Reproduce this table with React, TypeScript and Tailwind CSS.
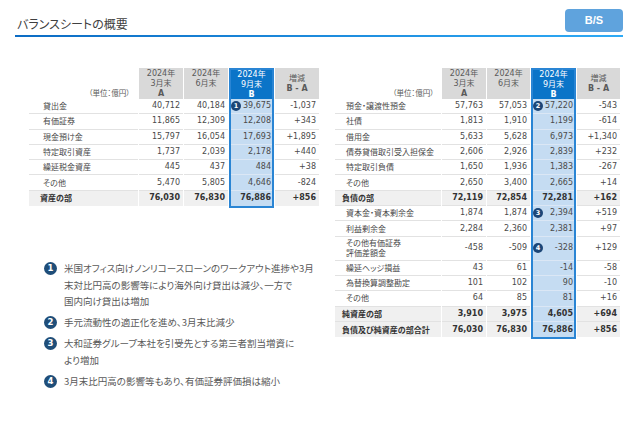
type Row = {
  label: string;
  a: string;
  b: string;
  c: string;
  d: string;
  bold?: boolean;
  badge?: number;
  two?: boolean;
};

const leftRows: Row[] = [
  { label: "貸出金", a: "40,712", b: "40,184", c: "39,675", d: "-1,037", badge: 1 },
  { label: "有価証券", a: "11,865", b: "12,309", c: "12,208", d: "+343" },
  { label: "現金預け金", a: "15,797", b: "16,054", c: "17,693", d: "+1,895" },
  { label: "特定取引資産", a: "1,737", b: "2,039", c: "2,178", d: "+440" },
  { label: "繰延税金資産", a: "445", b: "437", c: "484", d: "+38" },
  { label: "その他", a: "5,470", b: "5,805", c: "4,646", d: "-824" },
  { label: "資産の部", a: "76,030", b: "76,830", c: "76,886", d: "+856", bold: true },
];

const rightRows: Row[] = [
  { label: "預金・譲渡性預金", a: "57,763", b: "57,053", c: "57,220", d: "-543", badge: 2 },
  { label: "社債", a: "1,813", b: "1,910", c: "1,199", d: "-614" },
  { label: "借用金", a: "5,633", b: "5,628", c: "6,973", d: "+1,340" },
  { label: "債券貸借取引受入担保金", a: "2,606", b: "2,926", c: "2,839", d: "+232" },
  { label: "特定取引負債", a: "1,650", b: "1,936", c: "1,383", d: "-267" },
  { label: "その他", a: "2,650", b: "3,400", c: "2,665", d: "+14" },
  { label: "負債の部", a: "72,119", b: "72,854", c: "72,281", d: "+162", bold: true },
  { label: "資本金・資本剰余金", a: "1,874", b: "1,874", c: "2,394", d: "+519", badge: 3 },
  { label: "利益剰余金", a: "2,284", b: "2,360", c: "2,381", d: "+97" },
  { label: "その他有価証券\n評価差額金", a: "-458", b: "-509", c: "-328", d: "+129", badge: 4, two: true },
  { label: "繰延ヘッジ損益", a: "43", b: "61", c: "-14", d: "-58" },
  { label: "為替換算調整勘定", a: "101", b: "102", c: "90", d: "-10" },
  { label: "その他", a: "64", b: "85", c: "81", d: "+16" },
  { label: "純資産の部", a: "3,910", b: "3,975", c: "4,605", d: "+694", bold: true },
  { label: "負債及び純資産の部合計", a: "76,030", b: "76,830", c: "76,886", d: "+856", bold: true },
];

const jp = "font-['Noto_Sans_CJK_JP',sans-serif] [font-feature-settings:'palt']";
const num = "font-['DejaVu_Sans','Noto_Sans_CJK_JP',sans-serif]";

function NoteBadge({ n }: { n: number }) {
  return (
    <span
      className={`mt-[2px] flex h-[13px] w-[13px] shrink-0 items-center justify-center rounded-full bg-[#1f4e79] text-[8.5px] font-bold leading-none text-white ${num}`}
    >
      {n}
    </span>
  );
}

function CellBadge({ n }: { n: number }) {
  return (
    <span
      className={`absolute left-0 top-1/2 flex h-[10px] w-[10px] -translate-y-1/2 items-center justify-center rounded-full bg-[#1c4677] text-[6.5px] font-bold leading-none text-white ${num}`}
    >
      {n}
    </span>
  );
}

const rowH = (r: Row) => (r.two ? "h-[24px]" : "h-[15.3px]");

function NumColumn({
  rows,
  pick,
  width,
  head,
}: {
  rows: Row[];
  pick: (r: Row) => string;
  width: string;
  head: React.ReactNode;
}) {
  const last = rows.length - 1;
  return (
    <div className={`flex flex-col ${width}`}>
      {head}
      {rows.map((r, i) => (
        <div
          key={r.label}
          className={`flex ${rowH(r)} items-center justify-end pr-[3px] text-[8px] ${num} ${
            r.bold ? "bg-[#f0f0f0] font-bold text-[#333333]" : "bg-white text-[#4a4a4a]"
          } ${i === last ? "" : "border-b border-[#e2e2e2]"}`}
        >
          {pick(r)}
        </div>
      ))}
    </div>
  );
}

const grayHead = `flex h-[31px] flex-col items-center bg-[#d9d9d9] text-[8px] leading-[10px] text-[#595959] ${num}`;

function BSTable({
  rows,
  labelW,
  aW,
  bW,
  dW,
  indent,
  boldIndent,
  unitPad,
}: {
  rows: Row[];
  labelW: string;
  aW: string;
  bW: string;
  dW: string;
  indent: string;
  boldIndent: string;
  unitPad: string;
}) {
  const last = rows.length - 1;
  return (
    <div className="flex items-start gap-px">
      {/* label column */}
      <div className={`flex flex-col ${labelW}`}>
        <div className={`flex h-[31px] items-end justify-end pb-[1px] text-[7.5px] text-[#595959] ${jp} ${unitPad}`}>
          （単位：億円）
        </div>
        {rows.map((r, i) => (
          <div
            key={r.label}
            className={`flex ${rowH(r)} items-center whitespace-pre-line text-[8px] leading-[10px] ${jp} ${
              r.bold ? `bg-[#f0f0f0] font-bold text-[#333333] ${boldIndent}` : `bg-white text-[#4a4a4a] ${indent}`
            } ${i === last ? "" : "border-b border-[#e2e2e2]"}`}
          >
            {r.label}
          </div>
        ))}
      </div>

      <NumColumn
        rows={rows}
        pick={(r) => r.a}
        width={aW}
        head={
          <div className={`${grayHead} pt-[1px]`}>
            <span>2024年</span>
            <span>3月末</span>
            <span className="font-bold">A</span>
          </div>
        }
      />
      <NumColumn
        rows={rows}
        pick={(r) => r.b}
        width={bW}
        head={
          <div className={`${grayHead} pt-[1px]`}>
            <span>2024年</span>
            <span>6月末</span>
          </div>
        }
      />

      {/* highlighted B column */}
      <div className="flex w-[45px] flex-col border-2 border-[#2a85d4] bg-[#c5dcf2]">
        <div
          className={`flex h-[29px] flex-col items-center bg-[#0b74c8] text-[8px] leading-[10px] text-white ${num}`}
        >
          <span>2024年</span>
          <span>9月末</span>
          <span className="font-bold">B</span>
        </div>
        {rows.map((r, i) => (
          <div
            key={r.label}
            className={`relative flex ${rowH(r)} items-center justify-end pr-[1px] text-[8px] ${num} ${
              r.bold ? "font-bold text-[#333333]" : "text-[#4a4a4a]"
            } ${i === last ? "" : "border-b border-[#dbe7f5]"}`}
          >
            {r.badge && <CellBadge n={r.badge} />}
            {r.c}
          </div>
        ))}
      </div>

      <NumColumn
        rows={rows}
        pick={(r) => r.d}
        width={dW}
        head={
          <div className={`${grayHead} pt-[6px]`}>
            <span>増減</span>
            <span className="font-bold">B - A</span>
          </div>
        }
      />
    </div>
  );
}

const notes: { n: number; lines: string[] }[] = [
  {
    n: 1,
    lines: [
      "米国オフィス向けノンリコースローンのワークアウト進捗や3月",
      "末対比円高の影響等により海外向け貸出は減少、一方で",
      "国内向け貸出は増加",
    ],
  },
  { n: 2, lines: ["手元流動性の適正化を進め、3月末比減少"] },
  { n: 3, lines: ["大和証券グループ本社を引受先とする第三者割当増資に", "より増加"] },
  { n: 4, lines: ["3月末比円高の影響等もあり、有価証券評価損は縮小"] },
];

export default function App() {
  return (
    <div className="h-[443px] w-[640px] overflow-hidden bg-white">
      {/* title bar */}
      <div className="ml-[15px] w-[608px] pt-[9px]">
        <div className="flex items-end justify-between">
          <h1 className={`pb-[2px] pl-[2px] text-[12px] leading-none text-[#404040] ${jp}`}>バランスシートの概要</h1>
          <div className="flex h-[23px] w-[58px] items-center justify-center rounded-[4px] bg-[#5fa3dd] font-['Liberation_Sans',sans-serif] text-[11px] font-bold text-white">
            B/S
          </div>
        </div>
        <div className="mt-[3px] h-[2px] bg-gradient-to-r from-[#0c6cc4] to-[#2eaaf5]" />
      </div>

      <div className="ml-[29px] mt-[31px] flex items-start gap-[16px]">
        <div className="flex flex-col">
          <BSTable
            rows={leftRows}
            labelW="w-[109px]"
            aW="w-[44px]"
            bW="w-[44px]"
            dW="w-[44px]"
            indent="pl-[14px]"
            boldIndent="pl-[11px]"
            unitPad="pr-[8px]"
          />
          <div
            className={`ml-[15px] mt-[52px] flex flex-col gap-[4.5px] text-[9.5px] leading-[16.5px] text-[#595959] ${jp}`}
          >
            {notes.map((item) => (
              <div key={item.n} className="flex gap-[7px]">
                <NoteBadge n={item.n} />
                <p className="whitespace-nowrap">
                  {item.lines.map((l, k) => (
                    <span key={k} className="block">
                      {l}
                    </span>
                  ))}
                </p>
              </div>
            ))}
          </div>
        </div>
        <BSTable
          rows={rightRows}
          labelW="w-[106px]"
          aW="w-[44px]"
          bW="w-[43px]"
          dW="w-[43px]"
          indent="pl-[11px]"
          boldIndent="pl-[7px]"
          unitPad="pr-[7px]"
        />
      </div>
    </div>
  );
}
